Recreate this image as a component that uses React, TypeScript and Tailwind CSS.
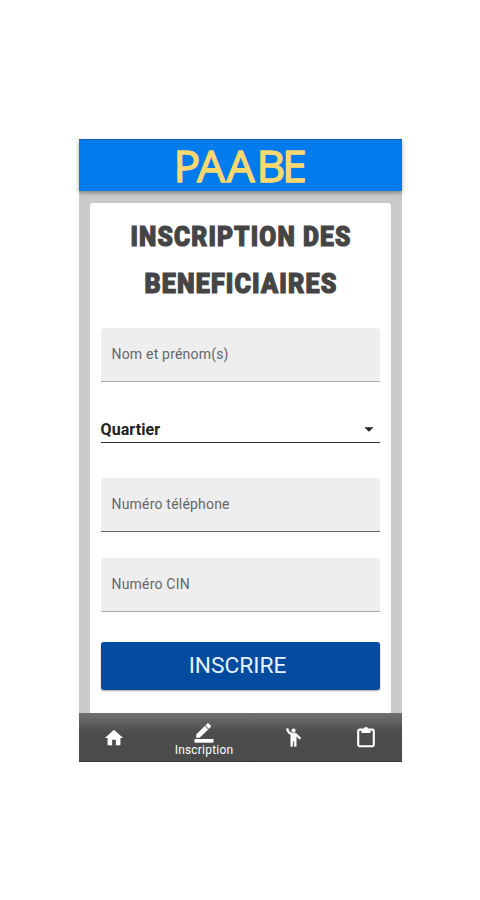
import React from "react";
import { MdArrowDropDown, MdEmojiPeople, MdHome } from "react-icons/md";

function Field({ label, line }: { label: string; line: string }) {
  return (
    <div
      className={`flex h-[54px] items-center rounded-t-[4px] border-b bg-[#eeeeee] px-[11px] pb-px text-[14px] tracking-[0.2px] text-[#666666] ${line}`}
    >
      {label}
    </div>
  );
}

function PencilLineIcon() {
  return (
    <svg width="20" height="20" viewBox="0 0 20 20" fill="currentColor">
      <path d="M2.2 11.4v3.4h3.4l8.6-8.4-3.4-3.4zM11.4 2.5l3.4 3.4 1.9-2c.4-.4.4-.9 0-1.3L14.6.5c-.4-.4-.9-.4-1.3 0z" />
      <path d="M.5 16h19v3.7H.5z" />
    </svg>
  );
}

function ClipboardIcon() {
  return (
    <svg width="18" height="22" viewBox="0 0 18 22" fill="none">
      <rect
        x="1.2"
        y="3.6"
        width="15.6"
        height="16.6"
        rx="1.4"
        stroke="currentColor"
        strokeWidth="2.1"
      />
      <path d="M4.5 3h2a2.6 2.6 0 0 1 5 0h2v4h-9z" fill="currentColor" />
    </svg>
  );
}

function Header() {
  return (
    <header className="relative flex h-[52px] justify-center border-t border-[#175bb0] bg-[#027bec] shadow-[0_2px_4px_rgba(0,0,0,0.35)]">
      <svg
        width="140"
        height="51"
        viewBox="0 0 140 51"
        role="img"
        className="overflow-visible"
      >
        <text
          x="3.5 27 56.5 86.5 112"
          y="41.5"
          fontFamily="Open Sans, Noto Sans, sans-serif"
          fontWeight="500"
          fontSize="44.5"
          fill="#f8d970"
          stroke="#f8d970"
          strokeWidth="1.3"
        >
          PAABE
        </text>
      </svg>
    </header>
  );
}

function Title() {
  return (
    <svg
      width="279"
      height="86"
      viewBox="0 0 279 86"
      role="img"
      className="overflow-visible"
    >
      <g
        fontFamily="Roboto, sans-serif"
        fontWeight="900"
        fontSize="28.5"
        letterSpacing="1.3"
        fill="#454545"
        stroke="#454545"
        strokeWidth="1.2"
      >
        <text x="29.5" y="32" textLength="221" lengthAdjust="spacingAndGlyphs">
          INSCRIPTION DES
        </text>
        <text x="43.5" y="79" textLength="193" lengthAdjust="spacingAndGlyphs">
          BENEFICIAIRES
        </text>
      </g>
    </svg>
  );
}

function NavBar() {
  return (
    <nav className="flex h-[49px] shrink-0 items-center border-b border-[#3a3a3a] bg-gradient-to-b from-[#727272] via-[#4d4d4d] via-40% to-[#4a4a4a] text-white">
      <div className="flex w-[71px] justify-center pt-px">
        <MdHome size={22} />
      </div>
      <div className="flex w-[108px] flex-col items-center pt-[6px]">
        <PencilLineIcon />
        <span className="pl-px text-[12px] leading-[15px] tracking-[0.2px]">
          Inscription
        </span>
      </div>
      <div className="flex w-[72px] justify-center pt-px">
        <MdEmojiPeople
          size={21}
          className="stroke-white stroke-[0.8] [&>path[fill=none]]:stroke-none"
        />
      </div>
      <div className="flex w-[72px] justify-center">
        <ClipboardIcon />
      </div>
    </nav>
  );
}

function App() {
  return (
    <div className="flex h-[900px] w-[480px] justify-center bg-white pt-[139px] font-['Roboto',sans-serif]">
      <div className="flex h-[623px] w-[323px] flex-col bg-[#cacaca]">
        <Header />
        <main className="mx-[11px] mt-3 flex h-[510px] flex-col rounded-t-[3px] bg-white px-[11px] pt-[11px]">
          <Title />
          <div className="mt-[28px]">
            <Field label="Nom et prénom(s)" line="border-[#aaaaaa]" />
          </div>
          <div className="mt-[34px] flex h-[27px] items-center justify-between border-b border-[#333333] text-[16px] font-bold tracking-[0.1px] text-[#222222]">
            <span className="pt-px">Quartier</span>
            <MdArrowDropDown size={22} />
          </div>
          <div className="mt-[35px] flex flex-col gap-[26px]">
            <Field label="Numéro téléphone" line="border-[#666666]" />
            <Field label="Numéro CIN" line="border-[#aaaaaa]" />
          </div>
          <button className="mt-[30px] h-[48px] shrink-0 rounded-[3px] bg-[#024b9f] pt-px pr-[5px] text-[22.7px] text-[#e8f3ff] shadow-[0_1px_2px_rgba(0,0,0,0.35)]">
            INSCRIRE
          </button>
        </main>
        <NavBar />
      </div>
    </div>
  );
}

export default App;
